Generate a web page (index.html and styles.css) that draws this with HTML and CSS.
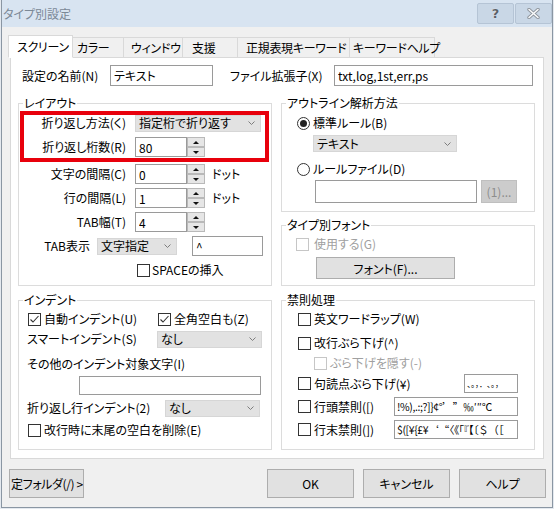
FILE: index.html
```html
<!DOCTYPE html>
<html lang="ja">
<head>
    <meta charset="UTF-8">
    <meta name="viewport" content="width=device-width, initial-scale=1.0">
    <title>タイプ別設定</title>
    <link rel="stylesheet" href="styles.css">
</head>
<body>
    <div class="window">
        <div class="titlebar">
            <span class="title">タイプ別設定</span>
            <div class="caption-buttons">
                <button class="cap-btn help-btn">?</button>
                <button class="cap-btn close-btn">
                    <svg width="13" height="11" viewBox="0 0 13 11">
                        <path d="M2 1.5 L11 9.5 M11 1.5 L2 9.5" stroke="#8f969e" stroke-width="3.4" stroke-linecap="round"/>
                        <path d="M2 1.5 L11 9.5 M11 1.5 L2 9.5" stroke="#fbfcfd" stroke-width="1.5" stroke-linecap="round"/>
                    </svg>
                </button>
            </div>
        </div>

        <div class="client">
            <div class="tabs">
                <div class="tab active">スクリーン</div>
                <div class="tab">カラー</div>
                <div class="tab">ウィンドウ</div>
                <div class="tab">支援</div>
                <div class="tab">正規表現キーワード</div>
                <div class="tab">キーワードヘルプ</div>
            </div>

            <div class="panel">
                <div class="name-row">
                    <span class="name-label">設定の名前(N)</span>
                    <input class="edit name-edit" value="テキスト">
                    <span class="ext-label">ファイル拡張子(X)</span>
                    <input class="edit ext-edit" value="txt,log,1st,err,ps">
                </div>

                <div class="groups">
                    <!-- レイアウト -->
                    <fieldset class="group group-layout">
                        <legend>レイアウト</legend>
                        <div class="highlight">
                            <div class="form-row">
                                <span class="row-label">折り返し方法(く)</span>
                                <div class="combo wrap-combo">
                                    <span>指定桁で折り返す</span>
                                    <svg width="7" height="4" viewBox="0 0 7 4"><polyline points="0.5,0.5 3.5,3.5 6.5,0.5" fill="none" stroke="#7d7d7d"/></svg>
                                </div>
                            </div>
                            <div class="form-row spaced">
                                <span class="row-label">折り返し桁数(R)</span>
                                <div class="spin">
                                    <input class="edit spin-edit" value="80">
                                    <div class="spin-btns"><span class="spin-up"></span><span class="spin-down"></span></div>
                                </div>
                            </div>
                        </div>
                        <div class="form-row first-after">
                            <span class="row-label">文字の間隔(C)</span>
                            <div class="spin">
                                <input class="edit spin-edit" value="0">
                                <div class="spin-btns"><span class="spin-up"></span><span class="spin-down"></span></div>
                            </div>
                            <span class="unit">ドット</span>
                        </div>
                        <div class="form-row spaced">
                            <span class="row-label">行の間隔(L)</span>
                            <div class="spin">
                                <input class="edit spin-edit" value="1">
                                <div class="spin-btns"><span class="spin-up"></span><span class="spin-down"></span></div>
                            </div>
                            <span class="unit">ドット</span>
                        </div>
                        <div class="form-row spaced">
                            <span class="row-label">TAB幅(T)</span>
                            <div class="spin">
                                <input class="edit spin-edit" value="4">
                                <div class="spin-btns"><span class="spin-up"></span><span class="spin-down"></span></div>
                            </div>
                        </div>
                        <div class="form-row spaced">
                            <span class="tab-label">TAB表示</span>
                            <div class="combo tab-combo">
                                <span>文字指定</span>
                                <svg width="7" height="4" viewBox="0 0 7 4"><polyline points="0.5,0.5 3.5,3.5 6.5,0.5" fill="none" stroke="#7d7d7d"/></svg>
                            </div>
                            <input class="edit tab-char" value="^">
                        </div>
                        <label class="check-row space-row">
                            <span class="cb"></span>SPACEの挿入
                        </label>
                    </fieldset>

                    <div class="right-col">
                        <!-- アウトライン解析方法 -->
                        <fieldset class="group group-outline">
                            <legend>アウトライン解析方法</legend>
                            <label class="check-row radio-row">
                                <span class="radio checked"></span>標準ルール(B)
                            </label>
                            <div class="combo rule-combo">
                                <span>テキスト</span>
                                <svg width="7" height="4" viewBox="0 0 7 4"><polyline points="0.5,0.5 3.5,3.5 6.5,0.5" fill="none" stroke="#7d7d7d"/></svg>
                            </div>
                            <label class="check-row radio-row file-radio">
                                <span class="radio"></span>ルールファイル(D)
                            </label>
                            <div class="file-row">
                                <input class="edit rule-file" value="">
                                <button class="btn small-btn" disabled>(1)...</button>
                            </div>
                        </fieldset>

                        <!-- タイプ別フォント -->
                        <fieldset class="group group-font">
                            <legend>タイプ別フォント</legend>
                            <label class="check-row font-check disabled">
                                <span class="cb"></span>使用する(G)
                            </label>
                            <button class="btn font-btn">フォント(F)...</button>
                        </fieldset>
                    </div>

                    <!-- インデント -->
                    <fieldset class="group group-indent">
                        <legend>インデント</legend>
                        <div class="check-row indent-checks">
                            <label class="auto-indent"><span class="cb checked"><svg width="11" height="11" viewBox="0 0 11 11"><polyline points="1.5,5.5 4,8 9.5,2" fill="none" stroke="#333" stroke-width="1.1"/></svg></span>自動インデント(U)</label>
                            <label><span class="cb checked"><svg width="11" height="11" viewBox="0 0 11 11"><polyline points="1.5,5.5 4,8 9.5,2" fill="none" stroke="#333" stroke-width="1.1"/></svg></span>全角空白も(Z)</label>
                        </div>
                        <div class="form-row smart-row">
                            <span>スマートインデント(S)</span>
                            <div class="combo smart-combo">
                                <span>なし</span>
                                <svg width="7" height="4" viewBox="0 0 7 4"><polyline points="0.5,0.5 3.5,3.5 6.5,0.5" fill="none" stroke="#7d7d7d"/></svg>
                            </div>
                        </div>
                        <div class="other-label">その他のインデント対象文字(I)</div>
                        <input class="edit other-chars" value="">
                        <div class="form-row wrap-indent-row">
                            <span>折り返し行インデント(2)</span>
                            <div class="combo wrap-indent-combo">
                                <span>なし</span>
                                <svg width="7" height="4" viewBox="0 0 7 4"><polyline points="0.5,0.5 3.5,3.5 6.5,0.5" fill="none" stroke="#7d7d7d"/></svg>
                            </div>
                        </div>
                        <label class="check-row trim-row">
                            <span class="cb"></span>改行時に末尾の空白を削除(E)
                        </label>
                    </fieldset>

                    <!-- 禁則処理 -->
                    <fieldset class="group group-kinsoku">
                        <legend>禁則処理</legend>
                        <label class="check-row kin-row">
                            <span class="cb"></span>英文ワードラップ(W)
                        </label>
                        <label class="check-row kin-row hang-row">
                            <span class="cb"></span>改行ぶら下げ(^)
                        </label>
                        <label class="check-row kin-row hide-row disabled">
                            <span class="cb"></span>ぶら下げを隠す(-)
                        </label>
                        <div class="check-row kin-row kin-field">
                            <span class="cb"></span>句読点ぶら下げ(¥)
                            <div class="edit kin-edit kuten-edit">、。，．､｡，</div>
                        </div>
                        <div class="check-row kin-row kin-field">
                            <span class="cb"></span>行頭禁則([)
                            <div class="edit kin-edit long-edit">!%),.:;?]}¢°<span class="fw">’”‰′″℃</span></div>
                        </div>
                        <div class="check-row kin-row kin-field">
                            <span class="cb"></span>行末禁則(])
                            <div class="edit kin-edit long-edit">$([¥{£¥<span class="fw">‘“</span>〈《「『【〔＄（［</div>
                        </div>
                    </fieldset>
                </div>
            </div>

            <div class="dialog-buttons">
                <button class="btn folder-btn">定フォルダ(/) &gt;</button>
                <button class="btn action-btn ok-btn">OK</button>
                <button class="btn action-btn">キャンセル</button>
                <button class="btn action-btn">ヘルプ</button>
            </div>
        </div>
    </div>
</body>
</html>
```

FILE: styles.css
```css
body {
    margin: 0;
    background-color: #e4e9ef;
    font-family: "Noto Sans CJK JP", sans-serif;
    font-size: 12px;
    line-height: 16px;
    color: #000;
    font-feature-settings: "palt";
}

input,
button {
    font-family: inherit;
    font-size: inherit;
    font-feature-settings: "palt";
    color: #000;
}

.window {
    box-sizing: border-box;
    width: 552px;
    height: 508px;
    margin-left: 1px;
    border: 1px solid #8a96a3;
    border-top: none;
    background-color: #f0f0f0;
    display: flex;
    flex-direction: column;
}

/* title bar */
.titlebar {
    flex: none;
    height: 27px;
    background-color: #d8e4f1;
    display: flex;
    justify-content: space-between;
    align-items: flex-start;
}

.title {
    padding: 6px 0 0 1px;
    color: #7b8896;
}

.caption-buttons {
    display: flex;
    gap: 1px;
    margin-top: 3px;
}

.cap-btn {
    box-sizing: border-box;
    width: 37px;
    height: 21px;
    padding: 0;
    border: 1px solid #b5c4d5;
    border-radius: 2px;
    background-color: #c9d7e6;
    display: flex;
    justify-content: center;
    align-items: center;
}

.help-btn {
    font-family: "DejaVu Sans", sans-serif;
    font-weight: bold;
    font-size: 13px;
    color: #5b6168;
    text-shadow: 0 0 1px #fff;
}

/* client area */
.client {
    flex: 1;
    display: flex;
    flex-direction: column;
    padding: 8px 8px 0;
}

.tabs {
    display: flex;
    align-items: flex-end;
    margin: 0 0 -1px -2px;
}

.tab {
    box-sizing: border-box;
    height: 21px;
    margin-left: -1px;
    padding: 2px 0 0 8px;
    border: 1px solid #d9d9d9;
    background-color: #f0f0f0;
    letter-spacing: -0.3px;
    white-space: nowrap;
}

.tab:first-child { margin-left: 0; width: 65px; }
.tab:nth-child(2) { width: 52px; padding-left: 4px; }
.tab:nth-child(3) { width: 60px; padding-left: 7px; }
.tab:nth-child(4) { width: 56px; padding-left: 9px; }
.tab:nth-child(5) { width: 113px; padding-left: 8px; }
.tab:nth-child(6) { width: 86px; padding-left: 3px; }

.tab.active {
    position: relative;
    z-index: 1;
    height: 23px;
    padding-top: 3px;
    background-color: #fff;
    border-bottom-color: #fff;
}

.panel {
    box-sizing: border-box;
    height: 402px;
    padding: 7px 8px 0 7px;
    border: 1px solid #d9d9d9;
    background-color: #fff;
}

/* edit boxes and combos */
.edit {
    box-sizing: border-box;
    height: 21px;
    margin: 0;
    padding: 0 3px;
    border: 1px solid #9a9a9a;
    background-color: #fff;
    outline: none;
}

.combo {
    box-sizing: border-box;
    height: 17px;
    padding: 0 5px 0 3px;
    border: 1px solid #d6d6d6;
    background-color: #e2e2e2;
    display: flex;
    justify-content: space-between;
    align-items: center;
    white-space: nowrap;
}

.btn {
    box-sizing: border-box;
    margin: 0;
    padding: 0;
    border: 1px solid #adadad;
    background-color: #e1e1e1;
    white-space: nowrap;
}

.btn:disabled {
    border-color: #bfbfbf;
    background-color: #cccccc;
    color: #8d8d8d;
}

/* name row */
.name-row {
    display: flex;
    align-items: center;
    height: 21px;
}

.name-label {
    box-sizing: border-box;
    width: 92px;
    padding-left: 4px;
    white-space: nowrap;
}

.name-edit { width: 103px; }

.ext-label {
    width: 104px;
    margin-left: 17px;
    white-space: nowrap;
}

.ext-edit { width: 199px; }

/* group boxes */
.groups {
    display: grid;
    grid-template-columns: 254px 254px;
    column-gap: 9px;
    row-gap: 6px;
    margin-top: 9px;
}

.group {
    box-sizing: border-box;
    min-width: 0;
    margin: 0;
    padding: 0;
    border: 1px solid #dcdcdc;
}

.group legend {
    margin-left: 4px;
    padding: 0 1px;
    line-height: 16px;
}

.group-layout { height: 191px; }
.group-indent,
.group-kinsoku { height: 158px; }

.right-col {
    display: flex;
    flex-direction: column;
    gap: 5px;
}

.group-outline { height: 117px; }
.group-font { height: 69px; }

/* layout rows */
.highlight {
    margin: 0 2px 0 1px;
    padding: 2px 0 5px;
    outline: 4px solid #e8000c;
    outline-offset: -4px;
}

.form-row {
    display: flex;
    align-items: center;
    height: 20px;
}

.form-row.spaced { margin-top: 4px; }
.form-row.first-after { margin-top: 2px; }

.row-label {
    flex: none;
    width: 107px;
    margin-right: 9px;
    text-align: right;
    white-space: nowrap;
}

.highlight .row-label { width: 106px; }

.wrap-combo { width: 126px; }

.spin {
    display: flex;
    height: 20px;
}

.spin-edit {
    width: 52px;
    height: 20px;
}

.spin-btns {
    display: flex;
    flex-direction: column;
    width: 18px;
}

.spin-up,
.spin-down {
    box-sizing: border-box;
    height: 10px;
    border: 1px solid #b9b9b9;
    background-color: #e6e6e6;
    display: flex;
    justify-content: center;
    align-items: center;
}

.spin-up::after,
.spin-down::after {
    content: "";
    border-left: 3px solid transparent;
    border-right: 3px solid transparent;
}

.spin-up::after { border-bottom: 3px solid #111; }
.spin-down::after { border-top: 3px solid #111; }

.unit {
    margin-left: 7px;
    white-space: nowrap;
}

.tab-label {
    flex: none;
    width: 71px;
    margin-right: 7px;
    text-align: right;
    white-space: nowrap;
}

.tab-combo { width: 80px; }

.tab-char {
    width: 71px;
    height: 20px;
    margin-left: 15px;
}

/* checkboxes and radios */
.check-row {
    display: flex;
    align-items: center;
    height: 16px;
    white-space: nowrap;
}

.check-row label {
    display: flex;
    align-items: center;
}

.cb,
.radio {
    box-sizing: border-box;
    flex: none;
    width: 13px;
    height: 13px;
    margin-right: 3px;
    border: 1px solid #333;
    background-color: #fff;
    display: flex;
    justify-content: center;
    align-items: center;
}

.radio { border-radius: 50%; }

.radio.checked::after {
    content: "";
    width: 7px;
    height: 7px;
    border-radius: 50%;
    background-color: #222;
}

.disabled { color: #a0a0a0; }
.disabled .cb { border-color: #c6c6c6; }

.space-row {
    margin-top: 6px;
    padding-left: 118px;
}

.space-row .cb { margin-right: 2px; }

/* outline analysis */
.radio-row {
    margin-top: 4px;
    padding-left: 15px;
}

.rule-combo {
    width: 144px;
    margin: 4px 0 0 31px;
}

.file-radio { margin-top: 9px; }

.file-row {
    display: flex;
    margin: 3px 0 0 33px;
}

.rule-file {
    width: 162px;
    height: 23px;
}

.small-btn {
    width: 36px;
    height: 23px;
    margin-left: 4px;
}

/* type font */
.font-check {
    margin-top: 3px;
    padding-left: 14px;
}

.font-check .cb { margin-right: 5px; }

.font-btn {
    display: block;
    width: 139px;
    height: 22px;
    margin: 5px 0 0 34px;
}

/* indent */
.indent-checks {
    margin-top: 3px;
    padding-left: 9px;
}

.auto-indent { width: 130px; }

.smart-row {
    height: 18px;
    margin-top: 3px;
    padding-left: 8px;
}

.smart-combo {
    width: 105px;
    margin-left: auto;
    margin-right: 9px;
}

.other-label {
    margin-top: 8px;
    padding-left: 8px;
    white-space: nowrap;
}

.other-chars {
    display: block;
    width: 182px;
    height: 19px;
    margin: 4px 0 0 60px;
}

.wrap-indent-row {
    height: 18px;
    margin-top: 4px;
    padding-left: 8px;
}

.wrap-indent-combo {
    width: 95px;
    margin-left: auto;
    margin-right: 11px;
}

.trim-row {
    margin-top: 5px;
    padding-left: 9px;
}

/* kinsoku */
.kin-row {
    margin-top: 4px;
    padding: 0 16px;
}

.kin-row:first-of-type { margin-top: 3px; }
.hang-row { margin-top: 8px; }
.hide-row { padding-left: 32px; }

.kin-field { height: 19px; }

.kin-edit {
    height: 19px;
    margin-left: auto;
    padding: 0 2px;
    overflow: hidden;
    font-size: 10.5px;
    line-height: 17px;
    font-feature-settings: normal;
    letter-spacing: -0.4px;
    white-space: nowrap;
}

.kin-edit .fw {
    font-feature-settings: "fwid";
    letter-spacing: 0;
}

.kuten-edit {
    width: 54px;
    font-size: 8px;
    letter-spacing: 0;
}

.long-edit { width: 124px; }

/* dialog buttons */
.dialog-buttons {
    display: flex;
    gap: 9px;
    margin: 10px -2px 0 -1px;
}

.dialog-buttons .btn { height: 29px; }

.folder-btn {
    width: 75px;
    padding-left: 1px;
    overflow: hidden;
    text-align: left;
    letter-spacing: -0.4px;
}

.action-btn { width: 87px; }

.ok-btn { margin-left: auto; }
```
